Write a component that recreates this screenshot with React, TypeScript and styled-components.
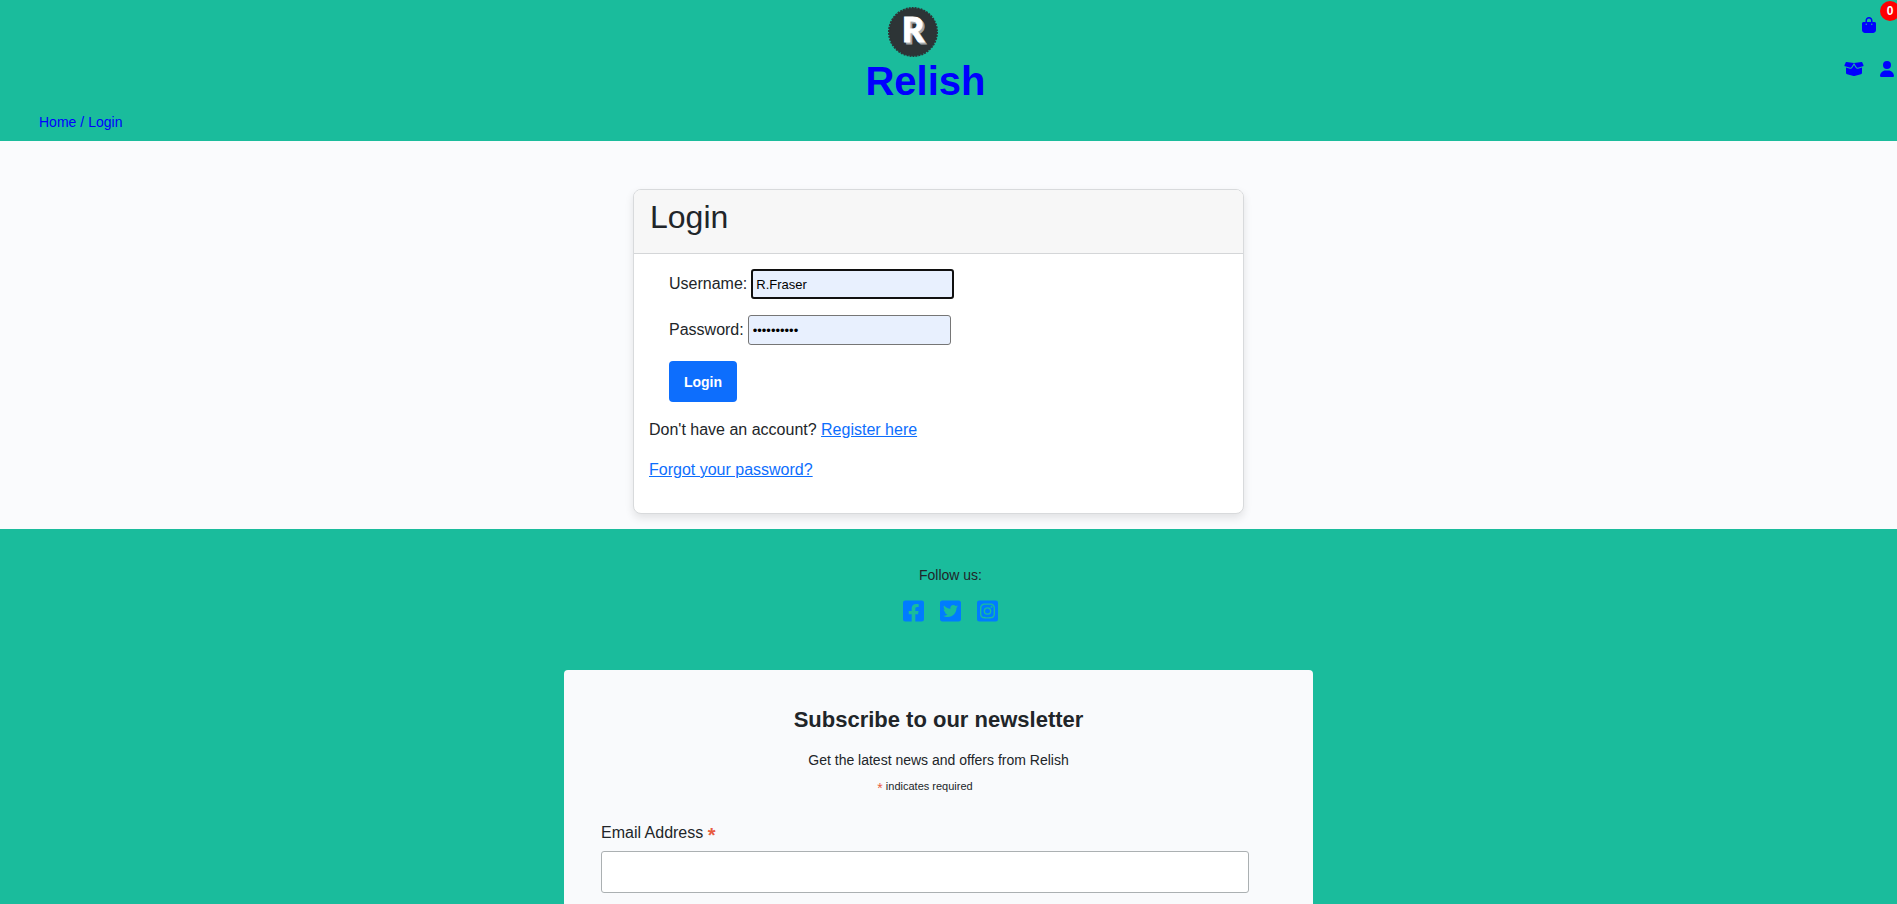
import React from "react";
import styled, { createGlobalStyle, css } from "styled-components";
import {
  FaFacebookSquare,
  FaInstagramSquare,
  FaTwitterSquare,
} from "react-icons/fa";
import { FaBagShopping, FaBoxOpen, FaUser } from "react-icons/fa6";

const GlobalStyle = createGlobalStyle`
  *, *::before, *::after { box-sizing: border-box; }
  body {
    margin: 0;
    background: #fafbfd;
    color: #212529;
    font-family: "Liberation Sans", Arial, sans-serif;
    font-size: 16px;
    line-height: 24px;
    overflow-x: hidden;
  }
  h1, h2, p { margin: 0; }
`;

const Header = styled.header`
  display: grid;
  grid-template-columns: 1fr auto 1fr 46px;
  grid-template-rows: auto auto;
  background: #1abc9c;
  padding: 7px 0 2px;
  overflow: hidden;
  position: relative;
`;

const Brand = styled.a`
  grid-column: 2;
  display: flex;
  flex-direction: column;
  color: #0000ff;
  text-decoration: none;
`;

const LogoMark = styled.svg`
  width: 50px;
  height: 50px;
  margin-left: 23px;
`;

const BrandName = styled.h1`
  font-size: 40px;
  line-height: 48px;
  font-weight: 700;
`;

const HeaderNav = styled.nav`
  grid-column: 3 / 5;
  justify-self: end;
  display: grid;
  grid-template-columns: auto auto;
  column-gap: 16px;
  align-content: start;
  padding-right: 3px;
`;

const IconLink = styled.a<{ $wide?: boolean }>`
  display: flex;
  height: 44px;
  padding-top: 10px;
  color: #0000ff;

  svg {
    height: 16px;
    width: ${(p) => (p.$wide ? 20 : 14)}px;
  }
`;

const CartLink = styled(IconLink)`
  grid-column: 1 / 3;
  justify-self: end;
  padding-right: 18px;
`;

const CartCount = styled.span`
  position: absolute;
  top: 1px;
  right: -3px;
  width: 20px;
  height: 20px;
  border-radius: 50%;
  background: #ff0000;
  color: #fff;
  font-size: 12px;
  font-weight: 700;
  line-height: 20px;
  text-align: center;
`;

const Breadcrumb = styled.nav`
  grid-column: 1 / 5;
  display: flex;
  gap: 4px;
  padding: 5px 39px;
  font-size: 14px;
  color: #0000ff;

  a {
    color: inherit;
    text-decoration: none;
  }
`;

const Main = styled.main`
  display: flex;
  justify-content: center;
  padding: 48px 20px 15px 0;
`;

const Card = styled.section`
  width: 100%;
  max-width: 611px;
  background: #fff;
  border: 1px solid #d8dadc;
  border-radius: 8px;
  box-shadow: 0 4px 8px rgba(0, 0, 0, 0.1);
`;

const CardHeader = styled.div`
  padding: 8px 16px 17px;
  background: #f7f7f7;
  border-bottom: 1px solid #d4d6d8;
  border-radius: 7px 7px 0 0;
`;

const CardTitle = styled.h2`
  font-size: 32px;
  line-height: 38px;
  font-weight: 400;
`;

const CardBody = styled.div`
  padding: 15px 15px 31px;
`;

const LoginForm = styled.form`
  display: flex;
  flex-direction: column;
  align-items: flex-start;
  gap: 16px;
  padding: 0 20px;
`;

const Field = styled.div`
  display: flex;
  align-items: center;
  gap: 4px;
  height: 30px;
`;

const TextInput = styled.input<{ $active?: boolean }>`
  width: 203px;
  height: 30px;
  padding: 1px 4px;
  border: 1px solid #767676;
  border-radius: 3px;
  background: #e8f0fe;
  color: #000;
  font: 13px "Liberation Sans", Arial, sans-serif;
  outline: none;
  ${(p) =>
    p.$active &&
    css`
      padding: 1px 3px;
      border: 2px solid #101010;
    `}
`;

const LoginButton = styled.button`
  width: 68px;
  height: 41px;
  padding: 0;
  border: 0;
  border-radius: 4px;
  background: #0d6efd;
  color: #fff;
  font: 700 14px "Liberation Sans", Arial, sans-serif;
`;

const CardText = styled.p`
  margin-top: 16px;

  a {
    color: #0d6efd;
  }
`;

const Footer = styled.footer`
  display: flex;
  flex-direction: column;
  align-items: center;
  background: #1abc9c;
  padding: 36px 0 0;
`;

const Social = styled.section`
  display: flex;
  flex-direction: column;
  align-items: center;
  gap: 14px;
  padding-left: 4px;
  font-size: 14px;
  line-height: 20px;
`;

const SocialLinks = styled.div`
  display: flex;
  gap: 16px;
`;

const SocialLink = styled.a`
  display: flex;
  color: #007bff;

  svg {
    width: 21px;
    height: 24px;
  }
`;

const NewsletterRow = styled.div`
  display: flex;
  justify-content: center;
  width: 100%;
  padding: 47px 20px 0 0;
`;

const Newsletter = styled.form`
  display: flex;
  flex-direction: column;
  width: 100%;
  max-width: 749px;
  padding: 36px 64px 48px 37px;
  border-radius: 4px;
  background: #f9fafc;
`;

const NewsletterIntro = styled.div`
  display: flex;
  flex-direction: column;
  align-items: center;
  gap: 16px;
  margin-right: -27px;
`;

const NewsletterTitle = styled.h2`
  font-size: 22px;
  line-height: 28px;
  font-weight: 700;
`;

const NewsletterText = styled.p`
  font-size: 14px;
  line-height: 20px;
`;

const RequiredNote = styled.p`
  margin-top: 8px;
  text-align: center;
  font-size: 11px;
  line-height: 16px;
`;

const Asterisk = styled.span<{ $large?: boolean }>`
  color: #e85c41;
  font-size: ${(p) => (p.$large ? 20 : 14)}px;
  font-weight: ${(p) => (p.$large ? 700 : 400)};
  line-height: 1;
  vertical-align: ${(p) => (p.$large ? -4 : -3)}px;
`;

const EmailLabel = styled.label`
  margin: 26px 0 6px;
  height: 24px;
`;

const EmailInput = styled.input`
  width: 100%;
  height: 42px;
  padding: 8px;
  border: 1px solid #abb0b2;
  border-radius: 3px;
  background: #fff;
  font: 16px "Liberation Sans", Arial, sans-serif;
`;

function Logo() {
  return (
    <LogoMark viewBox="0 0 50 50" aria-hidden="true">
      <circle cx="25" cy="25" r="24" fill="#2d3436" />
      <circle cx="25" cy="25" r="24" fill="none" stroke="#2d3436" strokeWidth="2" strokeDasharray="2 1" />
      <g fontFamily="Lato, sans-serif" fontWeight="900" fontSize="34" textAnchor="middle" strokeWidth="1">
        <text x="27" y="37" fill="#a5a9aa" stroke="#a5a9aa">R</text>
        <text x="25" y="35" fill="#fff" stroke="#fff">R</text>
      </g>
    </LogoMark>
  );
}

export default function App() {
  return (
    <>
      <GlobalStyle />
      <Header>
        <Brand href="#">
          <Logo />
          <BrandName>Relish</BrandName>
        </Brand>
        <HeaderNav aria-label="Account">
          <CartLink href="#" aria-label="Shopping bag">
            <FaBagShopping />
            <CartCount>0</CartCount>
          </CartLink>
          <IconLink href="#" aria-label="Products" $wide>
            <FaBoxOpen />
          </IconLink>
          <IconLink href="#" aria-label="Profile">
            <FaUser />
          </IconLink>
        </HeaderNav>
        <Breadcrumb aria-label="Breadcrumb">
          <a href="#">Home</a>
          <span>/</span>
          <a href="#">Login</a>
        </Breadcrumb>
      </Header>

      <Main>
        <Card>
          <CardHeader>
            <CardTitle>Login</CardTitle>
          </CardHeader>
          <CardBody>
            <LoginForm onSubmit={(e) => e.preventDefault()}>
              <Field>
                <label htmlFor="username">Username:</label>
                <TextInput id="username" defaultValue="R.Fraser" $active />
              </Field>
              <Field>
                <label htmlFor="password">Password:</label>
                <TextInput id="password" type="password" defaultValue="relish1234" />
              </Field>
              <LoginButton type="submit">Login</LoginButton>
            </LoginForm>
            <CardText>
              Don't have an account? <a href="#">Register here</a>
            </CardText>
            <CardText>
              <a href="#">Forgot your password?</a>
            </CardText>
          </CardBody>
        </Card>
      </Main>

      <Footer>
        <Social>
          <p>Follow us:</p>
          <SocialLinks>
            <SocialLink href="#" aria-label="Facebook"><FaFacebookSquare /></SocialLink>
            <SocialLink href="#" aria-label="Twitter"><FaTwitterSquare /></SocialLink>
            <SocialLink href="#" aria-label="Instagram"><FaInstagramSquare /></SocialLink>
          </SocialLinks>
        </Social>
        <NewsletterRow>
          <Newsletter onSubmit={(e) => e.preventDefault()}>
            <NewsletterIntro>
              <NewsletterTitle>Subscribe to our newsletter</NewsletterTitle>
              <NewsletterText>Get the latest news and offers from Relish</NewsletterText>
            </NewsletterIntro>
            <RequiredNote>
              <Asterisk>*</Asterisk> indicates required
            </RequiredNote>
            <EmailLabel htmlFor="email">
              Email Address <Asterisk $large>*</Asterisk>
            </EmailLabel>
            <EmailInput id="email" type="email" />
          </Newsletter>
        </NewsletterRow>
      </Footer>
    </>
  );
}
